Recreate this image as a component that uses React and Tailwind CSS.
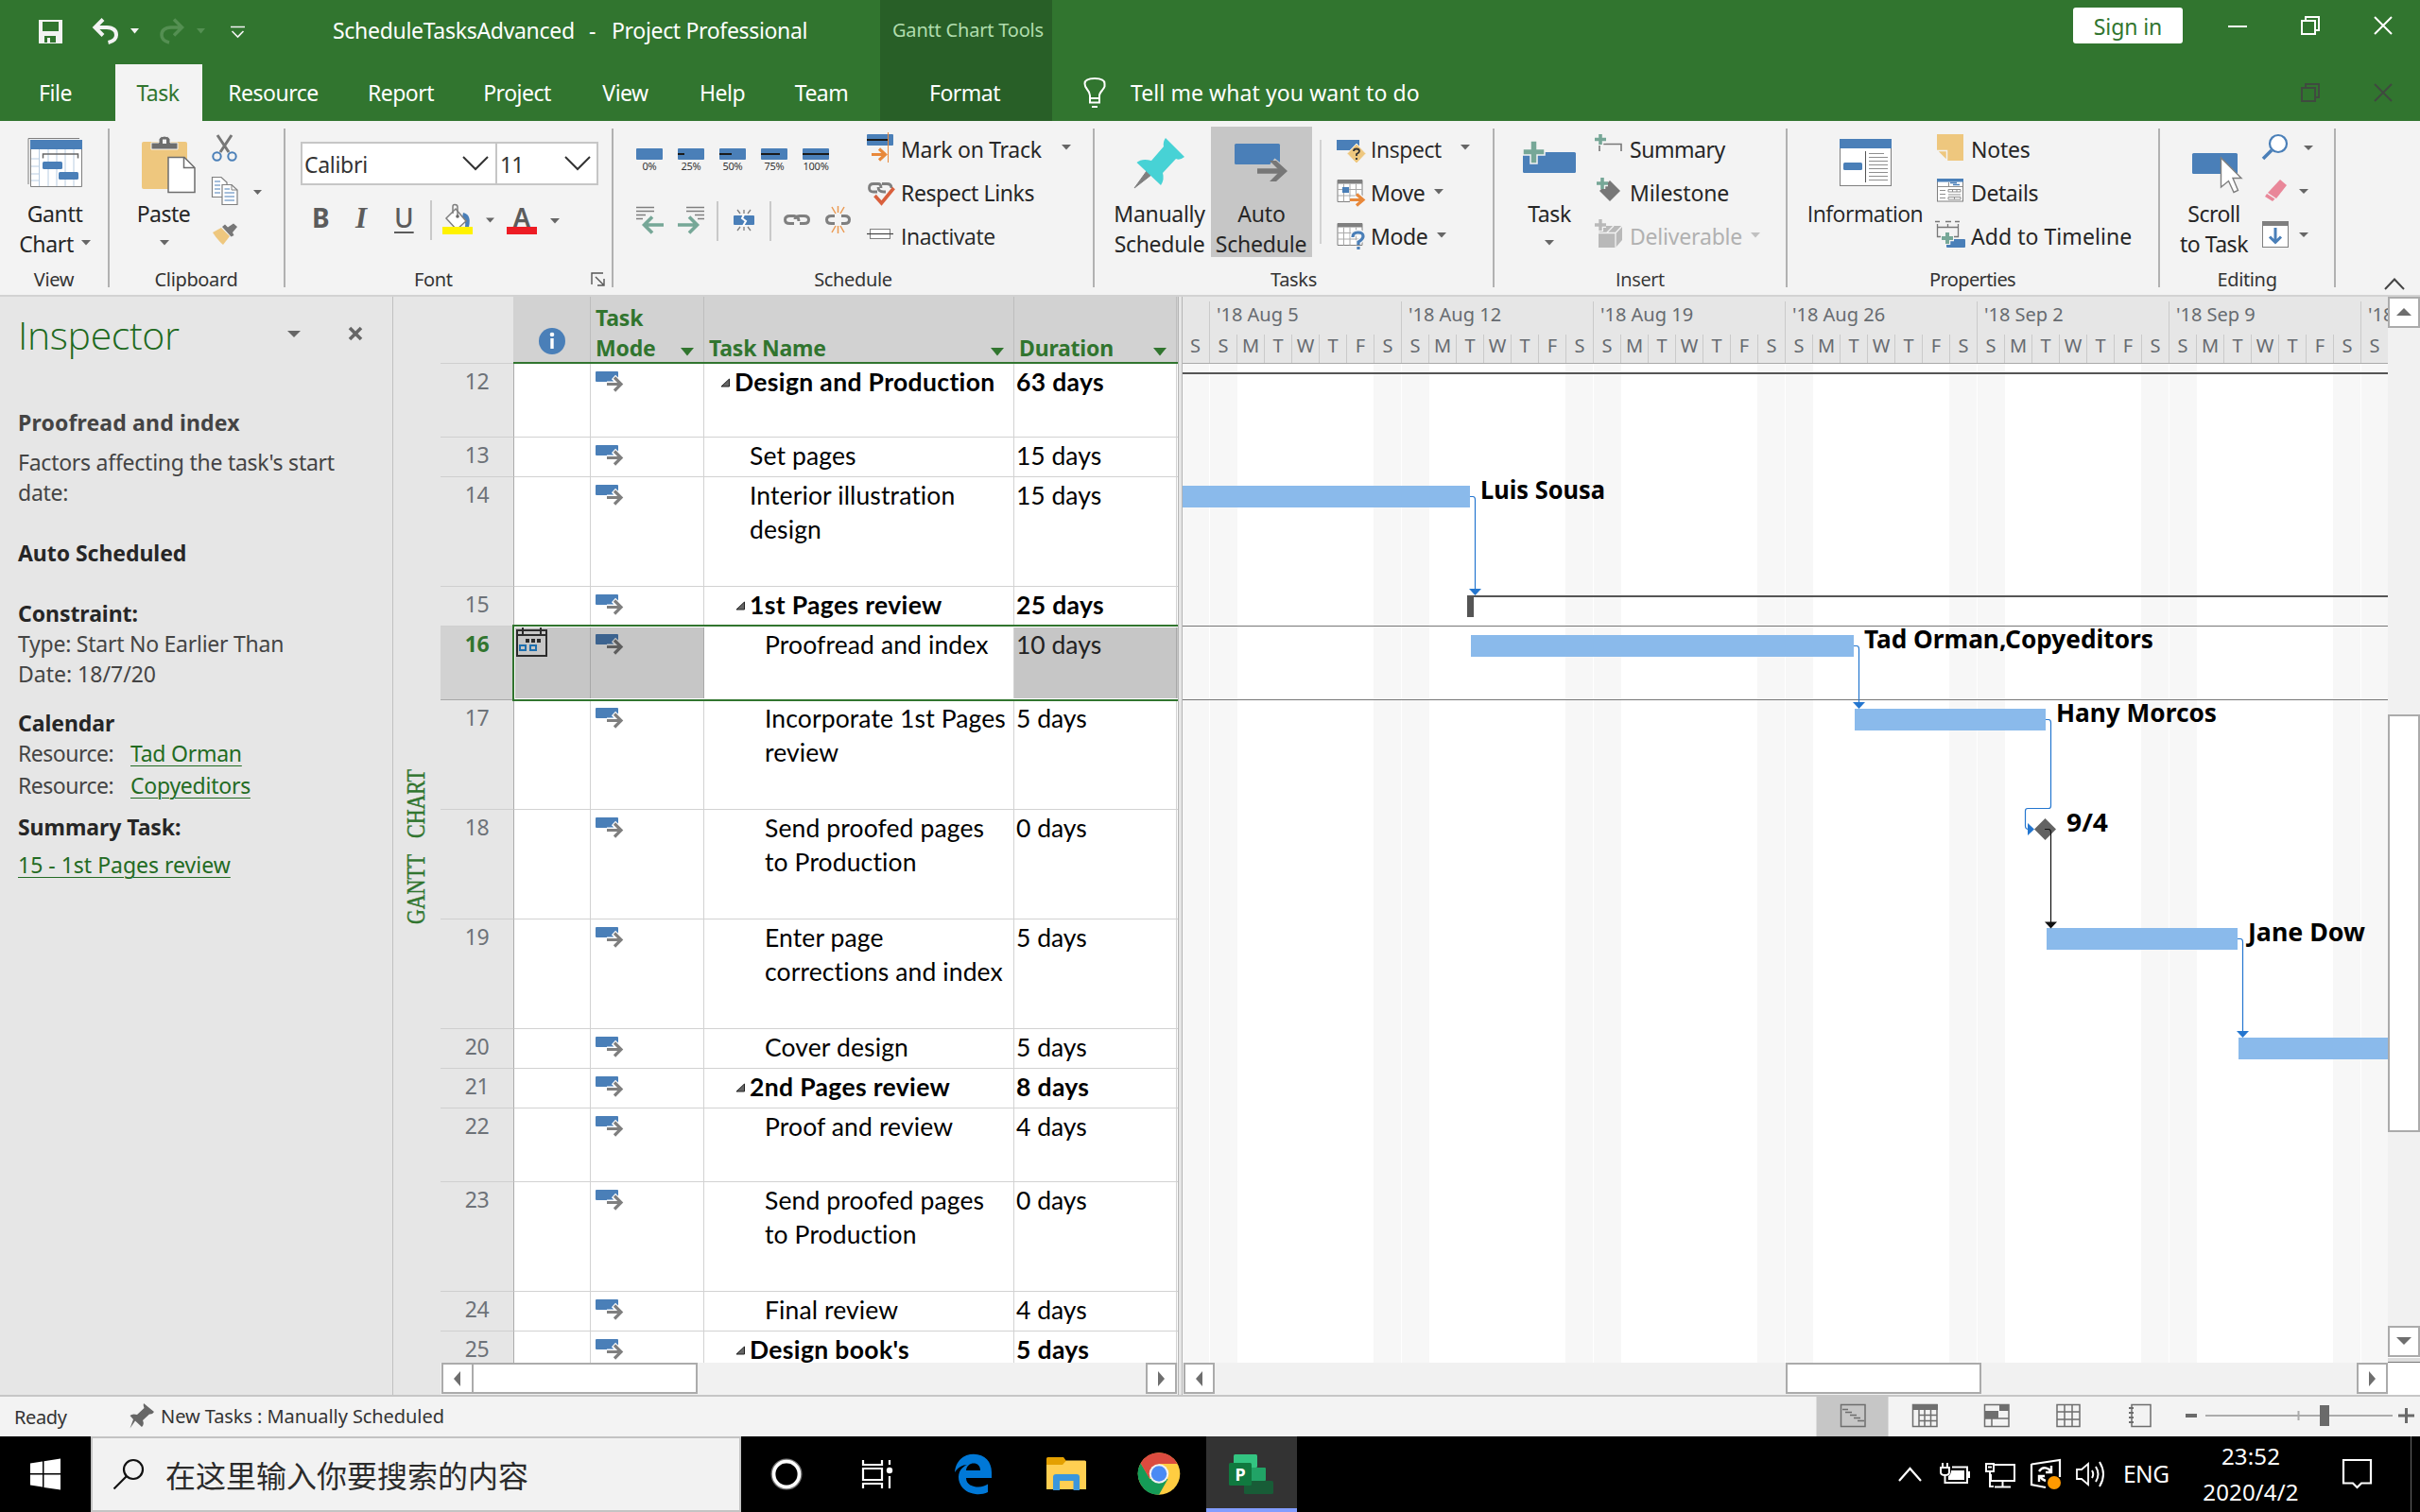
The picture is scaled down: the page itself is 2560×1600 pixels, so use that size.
import React from "react";

const UI = "font-['Noto_Sans','Noto_Sans_CJK_SC',sans-serif]";
const BLUE = "#4a7fb8";
const GREY = "#7f7f7f";
const GREEN = "#76a797";

/* A drawing whose shapes use window coordinates, cropped to x, y, w, h. */
function Pic({ x, y, w, h, className = "", children }) {
  return (
    <svg width={w} height={h} viewBox={`${x} ${y} ${w} ${h}`} className={"shrink-0 block " + className} fill="none">
      {children}
    </svg>
  );
}

function Caret({ className = "", color = "#666" }) {
  return (
    <svg width="10" height="6" viewBox="0 0 10 6" className={"shrink-0 block " + className}>
      <path d="M0 0H10L5 5.6Z" fill={color} />
    </svg>
  );
}

/* ---------------------------------------------------------------- Title bar */

function RestoreGlyph({ color }) {
  return (
    <svg width="20" height="20" viewBox="0 0 20 20" fill="none" className="block">
      <path d="M1 5H15V19H1Z M5 5V1H19V15H15" stroke={color} strokeWidth="2" />
    </svg>
  );
}

function CloseGlyph({ color }) {
  return (
    <svg width="20" height="20" viewBox="0 0 20 20" fill="none" className="block">
      <path d="M1 1L19 19M19 1L1 19" stroke={color} strokeWidth="2" />
    </svg>
  );
}

function TitleBar() {
  return (
    <div className="flex h-[68px] text-[23px] leading-[32px] text-white">
      <Pic x={0} y={0} w={352} h={68}>
        <path d="M41 21H66V46H41Z" fill="#f3f3f3" />
        <path d="M45 23H62V33H45Z" fill="#31752f" />
        <path d="M47 38H59V45H47Z" fill="#31752f" />
        <path d="M50 40H53V45H50Z" fill="#f3f3f3" />
        <path d="M109 20.5L100.5 29L109 37.5M101 29H113Q123 29.500 123 37Q123 43 114.500 45" stroke="#f3f3f3" strokeWidth="4" />
        <path d="M138 30H147L142.500 35.500Z" fill="#f3f3f3" />
        <path d="M184 20.500L192.500 29L184 37.500M192 29H181Q171 29.500 171 37Q171 43 179 45" stroke="#548f52" strokeWidth="3.5" />
        <path d="M208 30H217L212.500 35.500Z" fill="#548f52" />
        <path d="M244 28.500H259M245.500 33L251.500 39L257.500 33" stroke="#f3f3f3" strokeWidth="1.6" />
      </Pic>
      <div className="flex w-[579px] pt-4 whitespace-pre">
        <span className="w-[271px] tracking-[-0.3px]">ScheduleTasksAdvanced</span>
        <span className="w-[24px]">-</span>
        <span className="tracking-[-0.33px]">Project Professional</span>
      </div>
      <div className="w-[182px] bg-[#285f27] pt-4 pl-[13px] text-[20px] tracking-[-0.2px] whitespace-nowrap text-[#b0dcad]">
        Gantt Chart Tools
      </div>
      <div className="ml-[1080px] mt-2 h-[38px] w-[116px] rounded-[3px] bg-white pt-[4px] text-center tracking-[-0.1px] text-[#31752f]">
        Sign in
      </div>
      <div className="ml-[48px] mt-[27px] h-[2px] w-[20px] bg-white" />
      <div className="ml-[57px] mt-[17px]"><RestoreGlyph color="#fff" /></div>
      <div className="ml-[57px] mt-[17px]"><CloseGlyph color="#fff" /></div>
    </div>
  );
}

function Tab({ className, children }) {
  return <div className={"h-[60px] pt-[14px] text-center whitespace-nowrap tracking-[-0.5px] " + className}>{children}</div>;
}

function TabRow() {
  return (
    <div className="flex h-[60px] text-[23px] leading-[32px] text-white">
      <Tab className="mr-[5px] w-[117px]">File</Tab>
      <Tab className="w-[92px] bg-[#f3f3f3] pr-[2px] text-[#31752f]">Task</Tab>
      <Tab className="w-[150px]">Resource</Tab>
      <Tab className="w-[120px]">Report</Tab>
      <Tab className="w-[128px] pr-[2px]">Project</Tab>
      <Tab className="w-[99px]">View</Tab>
      <Tab className="w-[107px] pr-[1px]">Help</Tab>
      <Tab className="mr-[11px] w-[102px]">Team</Tab>
      <Tab className="w-[182px] bg-[#285f27] pr-[3px]">Format</Tab>
      <Pic x={1113} y={68} w={83} h={60}>
        <path d="M1153 104V101Q1153 98 1150 94.500Q1147.500 91.500 1147.500 88.500Q1147.500 83 1158 83Q1168.500 83 1168.500 88.500L1168.500 91.500Q1168 93 1166 95.500Q1163 99 1163 101V104" stroke="#fff" strokeWidth="2" />
        <path d="M1153 104H1163V108.500H1153ZM1155 113H1161" stroke="#fff" strokeWidth="2" />
      </Pic>
      <div className="w-[1238px] pt-[14px] tracking-[0.08px]">Tell me what you want to do</div>
      <div className="mt-5"><RestoreGlyph color="#3f4a3f" /></div>
      <div className="ml-[57px] mt-5"><CloseGlyph color="#3f4a3f" /></div>
    </div>
  );
}

/* ------------------------------------------------------------------- Ribbon */

function Group({ className, label, labelClass = "", children }) {
  return (
    <>
      <div className={"flex h-[176px] shrink-0 flex-col " + className}>
        <div className="flex h-[148px]">{children}</div>
        <div className={"flex h-[24px] items-center justify-center text-[20px] tracking-[-0.35px] text-[#333] " + labelClass}>{label}</div>
      </div>
      <div className="h-[168px] w-[2px] shrink-0 bg-[#b1b1b1]" />
    </>
  );
}

function Big({ className, icon, children }) {
  return (
    <div className={"flex shrink-0 flex-col items-center whitespace-nowrap text-center leading-[32px] " + className}>
      {icon}
      {children}
    </div>
  );
}

function Row({ icon, children, arrow, className = "" }) {
  return (
    <div className={"flex h-[46px] items-center whitespace-nowrap " + className}>
      {icon}
      <span className="-ml-[1px] pb-[2px]">{children}</span>
      {arrow}
    </div>
  );
}

function PercentButton({ label, done }) {
  return (
    <div className="flex w-[44px] flex-col items-center pt-[21px] text-[11px] leading-[13px] tracking-[-0.2px] text-[#333]">
      <svg width="28" height="12" className="block">
        <rect width="28" height="12" rx="1" fill={BLUE} />
        <rect y="5" width={done} height="2" fill="#1a1a1a" />
      </svg>
      {label}
    </div>
  );
}

function CalendarBase({ y }) {
  return (
    <>
      <path d={`M1415 ${y}H1441V${y + 23}H1415Z`} fill="#fff" stroke={GREY} strokeWidth="1" />
      <path d={`M1415 ${y}H1441V${y + 4}H1415Z`} fill={GREY} />
      <path d={`M1415 ${y + 10}H1441M1415 ${y + 16.500}H1441M1421.500 ${y + 4}V${y + 23}M1428 ${y + 4}V${y + 23}M1434.500 ${y + 4}V${y + 23}`} stroke="#aaa" />
    </>
  );
}

function ViewGroup() {
  return (
    <Group className="w-[114px]" label="View">
      <Big
        className="w-[114px] tracking-[-0.35px]"
        icon={
          <Pic x={-1} y={136} w={116} h={74}>
            <path d="M30 195V146.500H84" stroke={GREY} />
            <path d="M32.500 149H86.500V197.500H32.500Z" fill="#fff" stroke={GREY} />
            <path d="M32 148H87V158H32Z" fill={BLUE} />
            <path d="M41.500 158V197M51 158V197M60 158V197M69 158V197M78 158V197M33 168H41M33 176H41M33 184H41M33 191H41" stroke="#b9cde2" />
            <path d="M45.500 167.500V163H82.500V167.500" stroke="#666" strokeWidth="1.5" />
            <rect x="45" y="171" width="21" height="8" rx="1.500" fill={BLUE} />
            <rect x="62" y="182" width="21" height="8" rx="1.500" fill={BLUE} />
          </Pic>
        }
      >
        <span className="pl-[2px]">Gantt</span>
        <span className="flex items-center pl-[2px]">Chart<Caret className="ml-[8px] -mt-[2px]" /></span>
      </Big>
    </Group>
  );
}

function ClipboardGroup() {
  return (
    <Group className="w-[184px]" labelClass="pr-[1px]" label="Clipboard">
      <Big
        className="ml-[16px] w-[84px] tracking-[-0.5px]"
        icon={
          <Pic x={129} y={136} w={90} h={74}>
            <rect x="150" y="150" width="48" height="50" rx="2" fill="#eec77e" />
            <path d="M160 158V151H168V147Q170 144 174 144Q178 144 180 147V151H188V158Z" fill="#6d6d6d" stroke="#f3f3f3" />
            <path d="M172 147.500H176V152H172Z" fill="#f3f3f3" />
            <path d="M178 166.500H195L206 177.500V203.500H178Z" fill="#fff" stroke="#6d6d6d" strokeWidth="1.5" />
            <path d="M194.500 166.500V177.500H206" stroke="#6d6d6d" strokeWidth="1.500" />
          </Pic>
        }
      >
        <span className="pr-[2px]">Paste</span>
        <Caret className="mt-[12px]" />
      </Big>
      <Pic x={216} y={136} w={70} h={138}>
        <path d="M230 143L242 161M245 143L233 161" stroke="#777" strokeWidth="3" />
        <circle cx="229.500" cy="165.500" r="4.200" stroke={BLUE} strokeWidth="2" />
        <circle cx="245.500" cy="165.500" r="4.200" stroke={BLUE} strokeWidth="2" />
        <path d="M224.500 187.500H234L240 193V208.500H224.500Z" fill="#fff" stroke={GREY} strokeWidth="1.2" />
        <path d="M227 192H233M227 196H233M227 200H233M227 204H233" stroke={BLUE} strokeWidth="1.200" />
        <path d="M235 195.500H245L251 201V216.500H235Z" fill="#fff" stroke={GREY} strokeWidth="1.2" />
        <path d="M245 195.500V201H251" stroke={GREY} />
        <path d="M237.500 200H243M237.500 204H248M237.500 208H248M237.500 212H248" stroke={BLUE} strokeWidth="1.200" />
        <path d="M268 201H277L272.500 206Z" fill="#666" />
        <path d="M225 246L234 241L243 250L236 259Q230 254 225 246Z" fill="#eec77e" />
        <path d="M235 240L238 237.500L241 240.500L247 236.500L251 240L246 246L247.500 249L244.500 250.500Z" fill="#777" />
      </Pic>
    </Group>
  );
}

function Chevron() {
  return (
    <svg width="28" height="16" viewBox="0 0 28 16" className="block"><path d="M1 1L14 14L27 1" fill="none" stroke="#333" strokeWidth="2" /></svg>
  );
}

function FontGroup() {
  return (
    <Group
      className="w-[345px]"
      labelClass="w-[345px] pl-[116px] justify-between!"
      label={
        <>
          <span className="pl-[20px]">Font</span>
          <svg width="16" height="16" viewBox="0 0 16 16" className="mr-[6px] block">
            <path d="M1 13V1H13M5 5L13 13M14 7V14H7" fill="none" stroke="#555" strokeWidth="1.400" />
          </svg>
        </>
      }
    >
      <div className="flex flex-col pl-[16px] pt-[14px]">
        <div className="flex h-[46px] text-[#333]">
          <div className="flex w-[208px] items-center justify-between border-2 border-[#c6c6c6] bg-white pl-[2px] pr-[7px]">
            <span className="pt-[2px] tracking-[-0.3px]">Calibri</span><Chevron />
          </div>
          <div className="-ml-[2px] flex w-[109px] items-center justify-between border-2 border-[#c6c6c6] bg-white pl-[3px] pr-[6px]">
            <span className="pt-[2px] tracking-[-0.8px]">11</span><Chevron />
          </div>
        </div>
        <div className="mt-[11px] flex h-[50px] text-[28px] font-bold leading-[46px] text-[#5b5b5b]">
          <span className="w-[44px] pl-[12px]">B</span>
          <span className="w-[44px] pl-[14px] font-['Liberation_Serif',serif] text-[31px] italic leading-[48px]">I</span>
          <span className="w-[48px] pl-[11px] font-medium underline decoration-2 underline-offset-4">U</span>
          <Pic x={454} y={208} w={78} h={50}>
            <path d="M456 213V255" stroke="#c9c9c9" strokeWidth="2" />
            <path d="M490 226Q499 228 496 241H492Q493 234 489 231Z" fill={BLUE} />
            <path d="M482 222L493 235L483 244L472 232Z" fill="#fff" stroke={GREY} strokeWidth="1.500" />
            <path d="M479 227V219.500Q479 217.500 481 217.500Q484 217.500 484 220V230" stroke={GREY} strokeWidth="1.500" />
            <circle cx="484" cy="230" r="1.800" fill="#666" />
            <path d="M468 241H500V249H468Z" fill="#fff200" />
            <path d="M514 231.500H523L518.500 236.500Z" fill="#666" />
          </Pic>
          <div className="ml-[2px] flex w-[36px] flex-col items-center">
            <span className="h-[33px] font-semibold">A</span>
            <span className="h-[8px] w-[32px] bg-[#ed1c24]" />
          </div>
          <Caret className="ml-[12px] mt-[24px]" />
        </div>
      </div>
    </Group>
  );
}

function ScheduleGroup() {
  return (
    <Group className="w-[507px]" label="Schedule">
      <div className="w-[264px]">
        <div className="flex h-[60px] pl-[16px]">
          <PercentButton label="0%" done={0} />
          <PercentButton label="25%" done={7} />
          <PercentButton label="50%" done={13} />
          <PercentButton label="75%" done={20} />
          <PercentButton label="100%" done={28} />
        </div>
        <Pic x={649} y={196} w={264} h={76}>
          <path d="M673 219.500H692M673 223.500H692M673 227.500H683M673 231.500H680" stroke={GREY} strokeWidth="1.300" />
          <path d="M690 229.500L681.500 238L690 246.500M682 238H702" stroke={GREEN} strokeWidth="3.600" />
          <path d="M726 219.500H745M726 223.500H745M735 227.500H745M738 231.500H745" stroke={GREY} strokeWidth="1.300" />
          <path d="M729 229.500L737.500 238L729 246.500M737 238H717" stroke={GREEN} strokeWidth="3.600" />
          <path d="M759 213V255M815 213V255" stroke="#c9c9c9" strokeWidth="2" />
          <rect x="776" y="228" width="22" height="10" rx="1" fill={BLUE} />
          <path d="M787 227L785 231L789 234L786 239" stroke="#fff" strokeWidth="2" />
          <path d="M787 222V226M780 222L783 226M794 222L791 226M787 240V244M780 244L783 240M794 244L791 240" stroke={GREY} strokeWidth="1.300" />
          <path d="M840 236.500H835.500Q830.500 236.500 830.500 232.500Q830.500 228.500 835.500 228.500H840Q845 229 845 234M846 236.500H850.500Q855.500 236.500 855.500 232.500Q855.500 228.500 850.500 228.500H846Q841 229 841 232" stroke={GREY} strokeWidth="3" />
          <path d="M883 236.500H879.500Q874.500 236.500 874.500 232.500Q874.500 228.500 879.500 228.500H883M890 228.500H893.500Q898.500 228.500 898.500 232.500Q898.500 236.500 893.500 236.500H890" stroke={GREY} strokeWidth="3" />
          <path d="M886.500 218V225M880 219L884 226M893 219L889 226M886.500 239V247M880 246L884 239M893 246L889 239" stroke="#eb9a52" strokeWidth="1.500" />
        </Pic>
      </div>
      <div>
        <Row
          className="tracking-[-0.3px]"
          arrow={<Caret className="ml-[21px] -mt-[6px]" />}
          icon={
            <Pic x={913} y={136} w={41} h={46}>
              <rect x="917" y="142" width="28" height="12" rx="1" fill={BLUE} />
              <path d="M917 148H940" stroke="#1a1a1a" strokeWidth="2" />
              <path d="M939.500 140V172" stroke="#e8883a" />
              <path d="M922 163.500H936M930 157.500L936.500 163.500L930 169.500" stroke="#e8883a" strokeWidth="3.200" />
            </Pic>
          }
        >
          Mark on Track
        </Row>
        <Row
          className="tracking-[-0.4px]"
          icon={
            <Pic x={913} y={182} w={41} h={46}>
              <path d="M928 203H924Q919.500 203 919.500 199Q919.500 194.500 924 194.500H929Q932 194.500 932 199M933 194.500H938Q943 194.500 943 199M937 203H935Q929 203 929 198" stroke={GREY} strokeWidth="2.800" />
              <path d="M925.500 207L932.500 215L945.500 199" stroke="#d9603d" strokeWidth="3.600" />
            </Pic>
          }
        >
          Respect Links
        </Row>
        <Row
          className="font-['Open_Sans'] tracking-[-0.4px]"
          icon={
            <Pic x={913} y={228} w={41} h={46}>
              <rect x="920.500" y="242.500" width="21" height="10" fill="#fff" stroke={GREY} />
              <path d="M917 247.500H945" stroke="#444" strokeWidth="1.200" />
            </Pic>
          }
        >
          Inactivate
        </Row>
      </div>
    </Group>
  );
}

function TasksGroup() {
  return (
    <Group className="w-[421px]" label="Tasks">
      <Big
        className="ml-[15px] w-[107px] tracking-[-0.3px]"
        icon={
          <Pic x={1173} y={136} w={107} h={74}>
            <path d="M1213 181L1200 199L1218 185Z" fill={GREY} stroke={GREY} />
            <path d="M1233 146L1253 166Q1248 170 1244 168L1230 183Q1232 190 1228 196L1202.500 172Q1208 167 1218 170L1231 155Q1230 150 1233 146Z" fill="#47d2d5" />
          </Pic>
        }
      >
        <span>Manually</span>
        <span>Schedule</span>
      </Big>
      <Big
        className="-mt-[2px] ml-[1px] h-[138px] w-[107px] bg-[#c6c6c6] tracking-[-0.2px]"
        icon={
          <Pic x={1281} y={134} w={107} h={76}>
            <rect x="1306" y="152" width="48" height="22" rx="1.500" fill={BLUE} />
            <path d="M1330 181H1358M1346 170.500L1359 181L1346 191.500" stroke="#c6c6c6" strokeWidth="8" />
            <path d="M1330 181H1358" stroke="#777" strokeWidth="5.500" />
            <path d="M1343 170H1350L1362 181L1350 192H1343L1354 181Z" fill="#777" />
          </Pic>
        }
      >
        <span>Auto</span>
        <span className="pr-[1px]">Schedule</span>
      </Big>
      <div className="ml-[8px] mt-[12px] h-[110px] w-[2px] bg-[#d2d2d2]" />
      <div className="ml-[11px]">
        <Row
          className="font-['Open_Sans'] tracking-[-0.4px]"
          arrow={<Caret className="ml-[20px] -mt-[6px]" />}
          icon={
            <Pic x={1409} y={136} w={42} h={46}>
              <rect x="1414" y="148" width="24" height="11" fill={BLUE} />
              <path d="M1435 152L1445 162.500L1435 173L1425 162.500Z" fill="#eec77e" stroke="#f3f3f3" />
              <path d="M1432 160Q1432 157.500 1435 157.500Q1438 157.500 1438 160Q1438 161.500 1435 163V165M1435 167V169" stroke="#333" strokeWidth="1.800" />
            </Pic>
          }
        >
          Inspect
        </Row>
        <Row
          className="tracking-[-0.4px]"
          arrow={<Caret className="ml-[10px] -mt-[5px]" />}
          icon={
            <Pic x={1409} y={182} w={42} h={46}>
              <CalendarBase y={190.500} />
              <rect x="1420" y="198" width="7" height="6" fill={BLUE} />
              <path d="M1428 211.500H1441M1435 205.500L1442 211.500L1435 217.500" stroke="#f3f3f3" strokeWidth="6" />
              <path d="M1428 211.500H1441M1435 205.500L1442 211.500L1435 217.500" stroke="#e8883a" strokeWidth="3.200" />
            </Pic>
          }
        >
          Move
        </Row>
        <Row
          className="tracking-[-0.4px]"
          arrow={<Caret className="ml-[10px] -mt-[5px]" />}
          icon={
            <Pic x={1409} y={228} w={42} h={46}>
              <CalendarBase y={236.500} />
              <path d="M1431 251Q1431 246 1436.500 246Q1442 246 1442 250Q1442 253 1437 256V259M1437 261V264" stroke="#f3f3f3" strokeWidth="6" />
              <path d="M1431 251Q1431 246 1436.500 246Q1442 246 1442 250Q1442 253 1437 256V259M1437 261V264" stroke={BLUE} strokeWidth="3.200" />
            </Pic>
          }
        >
          Mode
        </Row>
      </div>
    </Group>
  );
}

function InsertGroup() {
  return (
    <Group className="w-[308px] " labelClass="font-['Open_Sans']" label="Insert">
      <Big
        className="ml-[14px] w-[88px] tracking-[-0.4px]"
        icon={
          <Pic x={1595} y={136} w={88} h={74}>
            <rect x="1611" y="161" width="56" height="22" rx="1.500" fill={BLUE} />
            <path d="M1619 149H1626V157.500H1634V164H1626V173H1619V164H1611V157.500H1619Z" fill={GREEN} stroke="#f3f3f3" strokeWidth="1.500" />
          </Pic>
        }
      >
        <span>Task</span>
        <Caret className="mt-[12px]" />
      </Big>
      <div>
        <Row
          className="tracking-[-0.45px]"
          icon={
            <Pic x={1683} y={136} w={42} h={46}>
              <path d="M1692 160V152.500H1715V160" stroke="#777" strokeWidth="1.600" />
              <path d="M1693 142V154M1687 148H1699" stroke="#f3f3f3" strokeWidth="6.500" />
              <path d="M1693 142V153M1687 147.500H1699" stroke={GREEN} strokeWidth="3.600" />
            </Pic>
          }
        >
          Summary
        </Row>
        <Row
          className="tracking-[-0.1px]"
          icon={
            <Pic x={1683} y={182} w={42} h={46}>
              <path d="M1703 191L1714 202L1703 213L1692 202Z" fill="#777" />
              <path d="M1695 188V200M1689 194H1701" stroke="#f3f3f3" strokeWidth="6.500" />
              <path d="M1695 188V200M1689 194H1701" stroke={GREEN} strokeWidth="3.600" />
            </Pic>
          }
        >
          Milestone
        </Row>
        <Row
          className="tracking-[-0.2px] text-[#b1b1b1]"
          arrow={<Caret className="ml-[9px] -mt-[5px]" color="#c0c0c0" />}
          icon={
            <Pic x={1683} y={228} w={42} h={46}>
              <path d="M1691 246L1698 239H1716V254L1709 262H1691Z" fill="#b9b9b9" />
              <path d="M1691 246.500H1709L1716 239M1709 246.500V262M1700 246L1707 239" stroke="#f3f3f3" strokeWidth="1.300" />
              <path d="M1693 232V245M1687 238H1699" stroke="#f3f3f3" strokeWidth="6" />
              <path d="M1693 232V244M1687 238H1699" stroke="#b9b9b9" strokeWidth="3.400" />
            </Pic>
          }
        >
          Deliverable
        </Row>
      </div>
    </Group>
  );
}

function PropertiesGroup() {
  return (
    <Group className="w-[392px]" labelClass="tracking-[-0.6px]! pr-[1px]" label="Properties">
      <Big
        className="ml-[14px] w-[136px] font-['Open_Sans'] tracking-[-0.45px]"
        icon={
          <Pic x={1905} y={136} w={136} h={74}>
            <rect x="1946.500" y="148" width="54" height="48.500" fill="#fff" stroke={GREY} />
            <rect x="1946" y="147" width="55" height="10" fill={BLUE} />
            <path d="M1973.500 160V193" stroke="#555" />
            <rect x="1950" y="172" width="20" height="8" rx="1.500" fill={BLUE} />
            <path d="M1977 162.500H1993M1977 166.500H1997M1977 170.500H1997M1977 174.500H1997M1977 178.500H1997M1977 182.500H1997M1977 186.500H1997M1977 190.500H1997" stroke="#8f8f8f" />
          </Pic>
        }
      >
        <span>Information</span>
      </Big>
      <div>
        <Row
          className="tracking-[-0.2px]"
          icon={
            <Pic x={2041} y={136} w={45} h={46}>
              <path d="M2049 142H2077V170H2060L2049 159Z" fill="#eec77e" />
              <path d="M2049 159.500H2059.500V170Z" fill="#eec77e" stroke="#f3f3f3" strokeWidth="1.500" />
            </Pic>
          }
        >
          Notes
        </Row>
        <Row
          className="tracking-[-0.4px]"
          icon={
            <Pic x={2041} y={182} w={45} h={46}>
              <rect x="2049.500" y="190" width="27" height="23" fill="#fff" stroke={GREY} />
              <rect x="2049" y="189" width="28" height="3.500" fill={BLUE} />
              <path d="M2050 197.500H2076M2061.500 193V197M2052 201.500H2058M2052 205.500H2058M2052 209.500H2058M2061 200.500H2074V203H2061ZM2061 206H2074M2061 208.500H2074V211H2061ZM2065.500 200.500V203M2070 200.500V203M2067.500 208V211" stroke="#8f8f8f" />
              <path d="M2063 193.500H2070M2066 195.500H2073" stroke={BLUE} strokeWidth="1.300" />
            </Pic>
          }
        >
          Details
        </Row>
        <Row
          className="tracking-[0.05px]"
          icon={
            <Pic x={2041} y={228} w={45} h={46}>
              <path d="M2047 234.500H2052M2058 234.500H2064M2068 234.500H2073M2049.500 237V250.500H2071.500V237M2049.500 240.500H2071.500M2060.500 237V240" stroke="#777" strokeWidth="1.300" />
              <rect x="2059" y="253" width="20" height="9" rx="1" fill={BLUE} />
              <path d="M2060 245V259M2053 252H2067" stroke="#f3f3f3" strokeWidth="6.500" />
              <path d="M2060 246V258M2054 252H2066" stroke={GREEN} strokeWidth="4" />
            </Pic>
          }
        >
          Add to Timeline
        </Row>
      </div>
    </Group>
  );
}

function EditingGroup() {
  return (
    <Group className="w-[184px]" label="Editing">
      <Big
        className="ml-[13px] w-[88px] tracking-[-0.5px]"
        icon={
          <Pic x={2298} y={136} w={88} h={74}>
            <rect x="2319" y="162" width="48" height="22" rx="1.500" fill={BLUE} />
            <path d="M2349.500 167L2371 188.500H2362L2367.500 201.500L2363 203.500L2357.500 191.500L2349.500 198Z" fill="#fff" stroke={GREY} strokeWidth="1.400" />
          </Pic>
        }
      >
        <span>Scroll</span>
        <span>to Task</span>
      </Big>
      <Pic x={2386} y={136} w={80} h={138}>
        <circle cx="2410" cy="152" r="9" fill="#fff" stroke={BLUE} strokeWidth="2.200" />
        <path d="M2403 159L2394 168" stroke={BLUE} strokeWidth="3.600" />
        <path d="M2437 154H2447L2442 159Z" fill="#666" />
        <path d="M2412 190L2419 196L2408 210L2399 204Z" fill="#e98799" />
        <path d="M2398 205L2406.500 210.500L2404 213L2396 208Z" fill="#e98799" />
        <path d="M2432 200H2442L2437 205Z" fill="#666" />
        <rect x="2393.500" y="235" width="27" height="26.500" fill="#fff" stroke={GREY} />
        <rect x="2393" y="234" width="28" height="5" fill={GREY} />
        <path d="M2407 241V256M2401 250.500L2407 256.500L2413 250.500" stroke={BLUE} strokeWidth="3" />
        <path d="M2432 246H2442L2437 251Z" fill="#666" />
      </Pic>
    </Group>
  );
}

function Ribbon() {
  return (
    <div className="flex h-[186px] border-b-2 border-[#d2d2d2] bg-[#f3f3f3] pt-2 text-[23px] text-[#262626]">
      <ViewGroup />
      <ClipboardGroup />
      <FontGroup />
      <ScheduleGroup />
      <TasksGroup />
      <InsertGroup />
      <PropertiesGroup />
      <EditingGroup />
      <svg width="22" height="13" viewBox="0 0 22 13" className="ml-[51px] mt-[158px] block">
        <path d="M1 12L11 1.500L21 12" fill="none" stroke="#444" strokeWidth="2" />
      </svg>
    </div>
  );
}

/* ---------------------------------------------------------------- Inspector */

function Inspector() {
  const link = "text-[#236b23] underline decoration-1 underline-offset-[4px]";
  const bold = "font-bold text-[#262626] tracking-[-0.05px]";
  return (
    <div className="h-[1162px] w-[416px] shrink-0 border-r border-[#c0c0c0] pl-[19px] text-[23px] leading-[32px] tracking-[-0.25px] text-[#444]">
      <div className="flex h-[82px]">
        <div className="w-[285px] pt-[12px] font-['Open_Sans'] text-[41px] font-light leading-[56px] tracking-[-0.35px] text-[#1f6a1f]">Inspector</div>
        <svg width="14" height="8" viewBox="0 0 14 8" className="mt-[36px] block"><path d="M0 0H14L7 7Z" fill="#666" /></svg>
        <svg width="16" height="16" viewBox="0 0 16 16" className="ml-[50px] mt-[31px] block"><path d="M2 2L14 14M14 2L2 14" stroke="#666" strokeWidth="3.600" /></svg>
      </div>
      <div className="mt-[35px] font-bold tracking-[0.15px]">Proofread and index</div>
      <div className="mt-[10px]">Factors affecting the task's start<br />date:</div>
      <div className={"mt-[32px] " + bold}>Auto Scheduled</div>
      <div className={"mt-[32px] " + bold}>Constraint:</div>
      <div>Type: Start No Earlier Than</div>
      <div className="tracking-[0px]">Date: 18/7/20</div>
      <div className={"mt-[20px] " + bold}>Calendar</div>
      <div className="flex"><span className="w-[119px] tracking-[-0.5px]">Resource:</span><span className={link}>Tad Orman</span></div>
      <div className="mt-[2px] flex"><span className="w-[119px] tracking-[-0.5px]">Resource:</span><span className={link}>Copyeditors</span></div>
      <div className={"mt-[12px] " + bold}>Summary Task:</div>
      <div className="mt-[8px] tracking-[0px]"><span className={link}>15 - 1st Pages review</span></div>
    </div>
  );
}

/* -------------------------------------------------------------------- Table */

const ONE = "h-[42px]";
const TWO = "h-[78px]";
const THREE = "h-[116px]";
const TASKS = [
  { id: 12, h: TWO, level: 1, summary: true, name: ["Design and Production"], days: "63 days" },
  { id: 13, h: ONE, level: 2, name: ["Set pages"], days: "15 days" },
  { id: 14, h: THREE, level: 2, name: ["Interior illustration", "design"], days: "15 days" },
  { id: 15, h: ONE, level: 2, summary: true, name: ["1st Pages review"], days: "25 days" },
  { id: 16, h: TWO, level: 3, selected: true, name: ["Proofread and index"], days: "10 days" },
  { id: 17, h: THREE, level: 3, name: ["Incorporate 1st Pages", "review"], days: "5 days" },
  { id: 18, h: THREE, level: 3, name: ["Send proofed pages", "to Production"], days: "0 days" },
  { id: 19, h: THREE, level: 3, name: ["Enter page", "corrections and index"], days: "5 days" },
  { id: 20, h: ONE, level: 3, name: ["Cover design"], days: "5 days" },
  { id: 21, h: ONE, level: 2, summary: true, name: ["2nd Pages review"], days: "8 days" },
  { id: 22, h: TWO, level: 3, name: ["Proof and review"], days: "4 days" },
  { id: 23, h: THREE, level: 3, name: ["Send proofed pages", "to Production"], days: "0 days" },
  { id: 24, h: ONE, level: 3, name: ["Final review"], days: "4 days" },
  { id: 25, h: ONE, level: 2, summary: true, name: ["Design book's"], days: "5 days" },
];
const INDENT = { 1: "pl-[17px]", 2: "pl-[33px]", 3: "pl-[49px]" };

function ModeIcon({ selected }) {
  const line = selected ? "#c6c6c6" : "#fff";
  return (
    <svg width="30" height="24" viewBox="0 0 30 24" className="block" fill="none">
      <rect width="24" height="11" rx="1" fill={selected ? "#3c638f" : BLUE} />
      <path d="M12 13.500H27M19 6L27 13.500L19 21" stroke={line} strokeWidth="6" />
      <path d="M12 13.500H27M20 6.500L27 13.500L20 20.500" stroke={selected ? "#5e5e5e" : GREY} strokeWidth="3.200" />
    </svg>
  );
}

function TaskRow({ task }) {
  const sel = task.selected;
  const cell = sel ? "border-[#a8a8a8] bg-[#c6c6c6]" : "border-[#d2d2d2]";
  return (
    <div className={"relative flex shrink-0 " + task.h + (sel ? " z-10" : "")}>
      <div className={"h-full w-[77px] border-b text-center text-[23px] leading-[37px] tracking-[-0.3px] " + (sel ? "border-[#a8a8a8] bg-[#d2d2d2] font-bold text-[#31752f]" : "border-[#cfcfcf] text-[#6d7278]")}>
        {task.id}
      </div>
      <div className={"flex h-full w-[703px] border-b border-l border-b-[#d2d2d2] border-l-[#ababab] " + (sel ? "bg-[#c6c6c6]" : "bg-white")}>
        <div className={"h-full w-[81px] border-r " + cell}>
          {sel && (
            <svg width="36" height="34" viewBox="0 0 36 34" className="ml-[1px] block" fill="none">
              <path d="M2 4H33V31H2ZM2 9H33M8 1V8M27 1V8" stroke="#2b2b2b" strokeWidth="2" />
              <path d="M11 13H15V17H11ZM17 13H21V17H17ZM23 13H27V17H23Z" fill="#2b2b2b" />
              <path d="M5 20H11V25H5ZM16 20H22V25H16Z" stroke="#1d6fae" strokeWidth="2" />
            </svg>
          )}
        </div>
        <div className={"h-full w-[120px] border-r pl-[5px] pt-[8px] " + cell}><ModeIcon selected={sel} /></div>
        <div className={"flex h-full w-[328px] border-r pt-[1px] border-[#d2d2d2] " + (sel ? "bg-white " : "") + INDENT[task.level]}>
          <div className="w-[15px] pt-[14px]">
            {task.summary && (
              <svg width="11" height="10" viewBox="0 0 11 10" className="block"><path d="M9.500 1V9H1Z" fill="#666" stroke="#222" /></svg>
            )}
          </div>
          <div className={"whitespace-nowrap font-['Lato'] text-[26.5px] leading-[36px] text-black " + (task.summary ? "font-bold tracking-[0.35px]" : "tracking-[0.12px]")}>
            {task.name.map((l, i) => <div key={i}>{l}</div>)}
          </div>
        </div>
        <div className={"h-full w-[172px] border-r pl-[2px] pt-[1px] font-['Lato'] text-[26.5px] leading-[36px] " + cell + (task.summary ? " font-bold text-black tracking-[0.35px]" : sel ? " text-[#222]" : " text-black")}>
          {task.days}
        </div>
      </div>
      {sel && <div className="absolute -top-[2px] left-[76px] h-[81px] w-[704px] border-2 border-r-0 border-[#31752f] shadow-[inset_1px_1px_0_#fff,inset_0_-1px_0_#fff]" />}
    </div>
  );
}

function HeadArrow() {
  return <svg width="14" height="9" viewBox="0 0 14 9" className="mb-[6px] block shrink-0"><path d="M0 0H14L7 8.500Z" fill="#31752f" /></svg>;
}

function ScrollButton({ dir, className = "" }) {
  const d = { left: "M11 1V17L4 9Z", right: "M4 1V17L11 9Z", up: "M0 12H16L8 4Z", down: "M0 4H16L8 12Z" }[dir];
  return (
    <div className={"flex shrink-0 items-center justify-center border-2 border-[#ababab] bg-white " + className}>
      <svg width="16" height="18" viewBox="0 0 16 18" className="block"><path d={d} fill="#6e6e6e" /></svg>
    </div>
  );
}

function TaskTable() {
  const head = "flex h-[69px] items-end border-r border-[#bdbdbd] font-bold leading-[32px]";
  return (
    <div className="h-[1162px] w-[780px] shrink-0">
      <div className="flex h-[71px] text-[23px] tracking-[-0.2px] text-[#31752f]">
        <div className="w-[77px] border-b border-[#cfcfcf]" />
        <div className="flex w-[703px] border-b-2 border-[#31752f] bg-[#d2d2d2]">
          <div className={head + " w-[82px] justify-center pb-[8px]"}>
            <svg width="28" height="28" viewBox="0 0 28 28" className="block">
              <circle cx="14" cy="14" r="14" fill={BLUE} />
              <circle cx="14" cy="7" r="2.300" fill="#fff" />
              <path d="M12.300 11H15.700V22H12.300Z" fill="#fff" />
            </svg>
          </div>
          <div className={head + " w-[120px] justify-between pl-[5px] pr-[10px]"}><span className="-mb-[1px]">Task<br />Mode</span><HeadArrow /></div>
          <div className={head + " w-[328px] justify-between pl-[5px] pr-[10px]"}><span className="-mb-[1px]">Task Name</span><HeadArrow /></div>
          <div className={head + " w-[172px] justify-between pl-[5px] pr-[10px]"}><span className="-mb-[1px]">Duration</span><HeadArrow /></div>
        </div>
      </div>
      <div className="flex h-[1057px] flex-col overflow-hidden">
        {TASKS.map((t) => <TaskRow key={t.id} task={t} />)}
      </div>
      <div className="flex h-[34px] bg-[#f1f1f1] pb-[1px] pl-[1px]">
        <ScrollButton dir="left" className="w-[34px]" />
        <div className="-ml-[2px] w-[239px] border-2 border-[#ababab] bg-white" />
        <ScrollButton dir="right" className="ml-auto mr-[1px] w-[33px]" />
      </div>
    </div>
  );
}

/* -------------------------------------------------------------- Gantt chart */

const WEEKS = ["'18 Aug 5", "'18 Aug 12", "'18 Aug 19", "'18 Aug 26", "'18 Sep 2", "'18 Sep 9"];
const DAYS = ["S", "M", "T", "W", "T", "F", "S"];
const WEEK_X = [1279, 1482, 1685, 1888, 2091, 2294, 2497];

function Day({ children }) {
  return <div className="h-[30px] w-[29px] border-r border-[#cacaca] text-center leading-[24px]">{children}</div>;
}

function TimeScale() {
  return (
    <div className="flex h-[71px] overflow-hidden border-b border-[#ababab] bg-[#e6e6e6] pt-[5px] text-[20px] text-[#666b70]">
      <div className="h-full w-[29px] shrink-0 border-r border-[#cacaca] pt-[35px] pr-[1px] text-center leading-[24px]">S</div>
      {WEEKS.map((w) => (
        <div key={w} className="w-[203px] shrink-0">
          <div className="h-[35px] border-r border-[#cacaca] pl-[7px] leading-[27px]">{w}</div>
          <div className="flex">{DAYS.map((d, i) => <Day key={i}>{d}</Day>)}</div>
        </div>
      ))}
      <div className="w-[29px] shrink-0 overflow-hidden whitespace-nowrap">
        <div className="h-[35px] pl-[7px] leading-[27px]">'18</div>
        <div className="pr-[1px] text-center leading-[24px]">S</div>
      </div>
    </div>
  );
}

function Chart() {
  const bar = "#8abaeb";
  const link = "#2476cf";
  return (
    <Pic x={1251} y={385} w={1275} h={1057} className="bg-white">
      {WEEK_X.map((x) => (
        <g key={x}>
          <rect x={x - 29} y="385" width="29" height="1057" fill="#f7f7f7" />
          <rect x={x + 1} y="385" width="29" height="1057" fill="#f7f7f7" />
        </g>
      ))}
      <path d="M1251 395H2526" stroke="#555" strokeWidth="2" />
      <path d="M1251 662.500H2526M1251 740.500H2526" stroke="#777" />
      <path d="M1556 631H2526" stroke="#555" strokeWidth="2" />
      <path d="M1552 630H1559V653H1552Z" fill="#555" />
      <g fill={bar}>
        <rect x="1251" y="514" width="304" height="23" />
        <rect x="1556" y="672" width="405" height="23" />
        <rect x="1962" y="750" width="202" height="23" />
        <rect x="2165" y="982" width="202" height="23" />
        <rect x="2368" y="1098" width="158" height="23" />
      </g>
      <g stroke={link} strokeWidth="1.200">
        <path d="M1555 525.500H1558Q1560.500 525.500 1560.500 529V624" />
        <path d="M1961 683.500H1964Q1966.500 683.500 1966.500 687V744" />
        <path d="M2164 761.500H2167Q2169.500 761.500 2169.500 765V853Q2169.500 855.500 2167 855.500H2145Q2142.500 855.500 2142.500 858V874Q2142.500 877.500 2146 877.500" />
        <path d="M2367 993.500H2370Q2372.500 993.500 2372.500 997V1092" />
      </g>
      <g fill={link}>
        <path d="M1554 623H1567L1560.500 630Z" />
        <path d="M1960 743H1973L1966.500 750Z" />
        <path d="M2145 871V884L2152 877.500Z" />
        <path d="M2366 1091H2379L2372.500 1098Z" />
      </g>
      <path d="M2163.500 866L2175 877.500L2163.500 889L2152 877.500Z" fill="#636363" />
      <path d="M2163 877.500H2167Q2169.500 877.500 2169.500 881V976" stroke="#111" strokeWidth="1.200" />
      <path d="M2163 975.500H2176L2169.500 982.500Z" fill="#111" />
      <g className="font-['Noto_Sans'] text-[26px] font-bold" fill="#000">
        <text x="1566" y="528" textLength="132" lengthAdjust="spacingAndGlyphs">Luis Sousa</text>
        <text x="1972" y="686" textLength="306" lengthAdjust="spacingAndGlyphs">Tad Orman,Copyeditors</text>
        <text x="2175" y="764" textLength="170" lengthAdjust="spacingAndGlyphs">Hany Morcos</text>
        <text x="2186" y="880" textLength="44" lengthAdjust="spacingAndGlyphs">9/4</text>
        <text x="2378" y="996" textLength="124" lengthAdjust="spacingAndGlyphs">Jane Dow</text>
      </g>
    </Pic>
  );
}

function GanttPane() {
  return (
    <div className="h-[1162px] w-[1275px] shrink-0">
      <TimeScale />
      <Chart />
      <div className="flex h-[34px] bg-[#f1f1f1] pb-[1px] pl-[1px]">
        <ScrollButton dir="left" className="w-[33px]" />
        <div className="ml-[604px] w-[207px] border-2 border-[#ababab] bg-white" />
        <ScrollButton dir="right" className="ml-auto w-[33px]" />
      </div>
    </div>
  );
}

function VerticalScroll() {
  return (
    <div className="flex h-[1162px] w-[34px] shrink-0 flex-col bg-white">
      <div className="flex h-[1122px] flex-col bg-[#f1f1f1]">
        <ScrollButton dir="up" className="h-[33px]" />
        <div className="mt-[409px] h-[442px] border-2 border-[#ababab] bg-white" />
        <ScrollButton dir="down" className="mt-auto h-[33px]" />
      </div>
      <div className="mt-[1px] h-[5px] border-b border-[#777] bg-[#dcdcdc]" />
    </div>
  );
}

/* --------------------------------------------------------------- Status bar */

function StatusBar() {
  return (
    <div className="flex h-[44px] border-t-2 border-[#c6c6c6] bg-[#f3f3f3] text-[20px] leading-[41px] text-[#333]">
      <span className="w-[137px] pl-[15px] pt-[1px] tracking-[-0.4px]">Ready</span>
      <Pic x={137} y={1478} w={33} h={42}>
        <path d="M152 1485L163 1494Q161 1497 158 1496.500L151 1503Q153 1507 150 1510L143 1503.500L137.500 1511.500L141 1502L137.500 1498Q140 1495.500 145 1497L152.500 1490Q151 1487 152 1485Z" fill="#666" />
      </Pic>
      <span className="w-[1751px] tracking-[-0.07px]">New Tasks : Manually Scheduled</span>
      <Pic x={1921} y={1478} w={639} h={42}>
        <rect x="1921.500" y="1478" width="76" height="42" fill="#c6c6c6" />
        <g stroke="#6e6e6e" strokeWidth="1.500">
          <path d="M1947.500 1486.500H1973V1509.500H1947.500ZM1949 1491.500H1955M1952 1494.500H1959M1957 1497.500H1964M1961 1500.500H1968M1965 1503.500H1972" />
          <path d="M2023.500 1486.500H2049V1509.500H2023.500ZM2030 1492V1509M2036 1492V1509M2042.500 1492V1509M2030 1497.500H2049M2030 1503.500H2049" />
          <path d="M2099.500 1486.500H2125V1509.500H2099.500ZM2107 1501V1509M2099 1501H2125" />
          <path d="M2176 1486.500H2200V1509.500H2176ZM2184 1486V1510M2192 1486V1510M2176 1494H2200M2176 1502H2200" />
          <path d="M2255 1486.500H2275V1509.500H2255Z" />
        </g>
        <path d="M2023 1486H2050V1492H2023ZM2115 1486H2125V1493H2115ZM2100 1493H2114V1501H2100ZM2252 1489H2257V1491H2252ZM2252 1494H2257V1496H2252ZM2252 1499H2257V1501H2252ZM2252 1504H2257V1506H2252Z" fill="#6e6e6e" />
        <path d="M2333 1498H2531" stroke="#ababab" strokeWidth="2" />
        <path d="M2431.500 1493V1503" stroke="#ababab" strokeWidth="2" />
        <path d="M2312 1496H2324V1500H2312ZM2454 1487H2464V1509H2454Z" fill="#6a6a6a" />
        <path d="M2537 1498H2554M2545.500 1490V1506" stroke="#6a6a6a" strokeWidth="3" />
      </Pic>
    </div>
  );
}

/* ------------------------------------------------------------------ Taskbar */

function TaskBar() {
  return (
    <div className="flex h-[80px] bg-black text-white">
      <Pic x={0} y={1520} w={96} h={80}>
        <path d="M32 1548.500L45 1546.500V1559H32ZM46.500 1546.200L64 1543.500V1559H46.500ZM32 1560.500H45V1573.500L32 1571.500ZM46.500 1560.500H64V1576.500L46.500 1574Z" fill="#fff" />
      </Pic>
      <div className="flex w-[688px] border-2 border-[#c3c3c3] bg-[#f2f2f2] text-[#2b2b2b]">
        <Pic x={98} y={1522} w={77} h={76}>
          <circle cx="141" cy="1555" r="10" stroke="#111" strokeWidth="2.200" />
          <path d="M134 1562L120.500 1575.500" stroke="#111" strokeWidth="2.200" />
        </Pic>
        <span className="whitespace-nowrap font-['Noto_Sans_CJK_SC',sans-serif] text-[32px] leading-[76px]">在这里输入你要搜索的内容</span>
      </div>
      <Pic x={784} y={1520} w={1216} h={80}>
        <circle cx="832" cy="1560" r="14" stroke="#777" strokeWidth="5" />
        <circle cx="832" cy="1560" r="13.500" stroke="#fff" strokeWidth="3.400" />
        <path d="M913 1545V1550H933V1545M913 1554H933V1566H913ZM913 1575V1570H933V1575M941 1545V1550M941 1562V1575" stroke="#fff" strokeWidth="2.200" />
        <circle cx="941" cy="1556" r="3.200" fill="#fff" />
        <path d="M1010 1558C1011 1545 1020 1538.700 1030 1538.700C1042 1538.700 1049 1547 1049 1558V1564H1022C1022 1571 1029 1573.500 1035 1573.500C1039 1573.500 1043 1572 1045 1570.500V1579C1041 1581 1036 1581.500 1032 1581C1021 1580 1014 1572 1014 1563C1014 1557 1018 1552 1023 1550C1018 1550 1013 1553 1010 1558ZM1022 1556H1037C1037 1551 1034 1548.500 1030 1548.500C1026 1548.500 1022.500 1551 1022 1556Z" fill="#0078d7" />
        <path d="M1107 1543.500Q1107 1542 1108.500 1542H1125L1128 1546H1147Q1149 1546 1149 1548V1552H1107Z" fill="#e4a000" />
        <path d="M1107 1550H1124L1128 1545.500H1147.500Q1149 1545.500 1149 1547V1576H1107Z" fill="#ffcf52" />
        <path d="M1114 1577V1563Q1114 1560 1117 1560H1139Q1142 1560 1142 1563V1577H1135.500V1567H1121V1577Z" fill="#3a96dd" />
        <circle cx="1226" cy="1559.500" r="22.300" fill="#ffcd41" />
        <path d="M1206.700 1548.300A22.300 22.300 0 0 0 1226 1581.800L1235.500 1565L1216.500 1565Z" fill="#159b57" />
        <path d="M1206.600 1548.500A22.300 22.300 0 0 1 1245.500 1549H1226L1216 1564.500Z" fill="#db4b3f" />
        <circle cx="1226" cy="1559.500" r="10.300" fill="#f1f1f1" />
        <circle cx="1226" cy="1559.500" r="8.200" fill="#4a8af4" />
        <rect x="1276" y="1520" width="96" height="80" fill="#333" />
        <rect x="1276" y="1596" width="96" height="4" fill="#829dff" />
        <rect x="1305" y="1539" width="25" height="14" rx="1.500" fill="#33c481" />
        <rect x="1318" y="1553" width="21" height="14" rx="1" fill="#21a366" />
        <rect x="1316" y="1567" width="31" height="14" rx="1.500" fill="#185c37" />
        <rect x="1300" y="1548" width="24" height="24" rx="1.500" fill="#10793f" />
        <text x="1312" y="1566.500" textAnchor="middle" className="font-['Noto_Sans'] text-[18px] font-bold" fill="#fff">P</text>
      </Pic>
      <Pic x={2000} y={1520} w={246} h={80}>
        <path d="M2009 1567L2020.500 1554L2032 1567" stroke="#fff" strokeWidth="2.200" />
        <path d="M2055 1548V1553M2060 1548V1553M2053 1553H2062V1558Q2062 1561 2057.500 1561Q2053 1561 2053 1558ZM2057.500 1561V1569H2066M2065 1552.500H2081V1569H2064M2083 1557V1564" stroke="#fff" strokeWidth="2" />
        <path d="M2064 1556H2078V1566H2061V1562Q2064 1560 2064 1556Z" fill="#fff" />
        <path d="M2110 1550H2131V1567H2106V1560M2118.500 1567V1573M2110 1573.500H2127M2101 1549H2109V1557H2101ZM2105 1557V1573H2109M2103 1552.500H2107" stroke="#fff" strokeWidth="2" />
        <path d="M2149 1549.500L2179 1545V1563M2149 1549V1571L2164 1574" stroke="#fff" strokeWidth="2.200" />
        <path d="M2157 1557Q2161 1551 2167 1554.500L2170 1557M2170 1551V1558H2164M2157 1568V1562H2163M2158 1562Q2160 1566 2164 1567" stroke="#fff" strokeWidth="2.400" />
        <circle cx="2173" cy="1569" r="7" fill="#ff9a00" />
        <path d="M2197 1555H2202L2209 1549V1571L2202 1565H2197Z" stroke="#fff" strokeWidth="1.800" />
        <path d="M2213 1556Q2215.500 1560 2213 1564M2217 1552Q2222 1560 2217 1568M2221 1547Q2229 1560 2221 1573" stroke="#fff" strokeWidth="2" />
      </Pic>
      <div className="w-[84px] text-[24.5px] leading-[79px] tracking-[-0.5px]">ENG</div>
      <div className="w-[102px] whitespace-nowrap pt-[2px] text-center text-[24px] leading-[38px] tracking-[0.15px]">23:52<br />2020/4/2</div>
      <Pic x={2432} y={1520} w={128} h={80}>
        <path d="M2479 1545H2508V1569.500H2498L2493.500 1574L2489 1569.500H2479Z" stroke="#fff" strokeWidth="2.200" />
        <path d="M2550.500 1520V1600" stroke="#666" />
      </Pic>
    </div>
  );
}

/* ---------------------------------------------------------------------- App */

export default function App() {
  return (
    <div className={"flex h-[1600px] w-[2560px] flex-col overflow-hidden bg-[#e6e6e6] " + UI}>
      <div className="h-[128px] bg-[#31752f]">
        <TitleBar />
        <TabRow />
      </div>
      <Ribbon />
      <div className="flex h-[1162px]">
        <Inspector />
        <Pic x={416} y={314} w={50} h={1162}>
          <g className="font-['Liberation_Serif'] text-[28px]" fill="#31752f" stroke="#31752f" strokeWidth="0.500">
            <text transform="translate(449 978) rotate(-90)" textLength="74" lengthAdjust="spacingAndGlyphs">GANTT</text>
            <text transform="translate(449 887) rotate(-90)" textLength="73" lengthAdjust="spacingAndGlyphs">CHART</text>
          </g>
        </Pic>
        <TaskTable />
        <div className="h-full w-[5px] shrink-0 border-x border-[#b5b5b5] bg-[#e6e6e6]" />
        <GanttPane />
        <VerticalScroll />
      </div>
      <StatusBar />
      <TaskBar />
    </div>
  );
}
